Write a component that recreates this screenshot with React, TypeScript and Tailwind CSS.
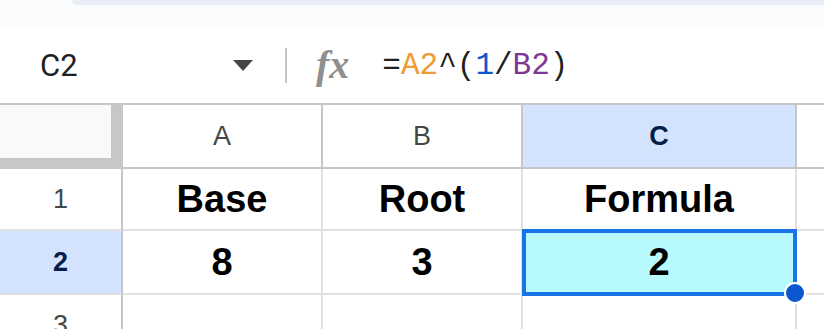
import React from "react";

const cols = [
  { key: "A", w: "w-[200px]" },
  { key: "B", w: "w-[200px]" },
  { key: "C", w: "w-[274px]" },
];

const rows = [
  { n: 1, h: "h-[62px]", cells: ["Base", "Root", "Formula"] },
  { n: 2, h: "h-[64px]", cells: ["8", "3", "2"] },
  { n: 3, h: "h-[62px]", cells: ["", "", ""] },
];

function FormulaBar() {
  return (
    <div className="flex h-[76px] items-center bg-white">
      {/* name box */}
      <div className="flex w-[285px] items-center pl-[40px] pr-[32px]">
        <span className="flex-1 font-['Roboto'] text-[31px] leading-none text-[#1f1f1f]">C2</span>
        <span className="h-0 w-0 border-x-[10px] border-t-[11px] border-x-transparent border-t-[#444746]" />
      </div>
      <div className="h-[35px] w-[2px] bg-[#c4c7c5]" />
      <span className="ml-[29px] font-['Liberation_Serif'] text-[40px] font-bold italic leading-none text-[#8f8f8f]">
        fx
      </span>
      <div className="ml-[33px] font-['Liberation_Mono'] text-[31px] leading-none text-[#1f1f1f]">
        =<span className="text-[#f09a35]">A2</span>^(<span className="text-[#1155cc]">1</span>/
        <span className="text-[#7e3794]">B2</span>)
      </div>
    </div>
  );
}

export default function App() {
  return (
    <div className="h-[329px] w-[824px] overflow-hidden bg-white font-['Liberation_Sans',Arial,sans-serif]">
      {/* top strip */}
      <div className="h-[27px] bg-[#f9fbfd]">
        <div className="ml-[72px] h-[5px] rounded-bl-[14px] bg-[#e9eef6]" />
      </div>

      <FormulaBar />
      <div className="h-[2px] bg-[#c4c7c5]" />

      {/* column headers */}
      <div className="flex h-[64px]">
        <div className="w-[123px] shrink-0 bg-[#c7c7c7]">
          <div className="h-[53px] w-[111px] bg-[#f8f9fa]" />
        </div>
        {cols.map((c) => (
          <div
            key={c.key}
            className={`${c.w} flex shrink-0 items-center justify-center border-r-2 border-b-2 border-[#c4c7c5] text-[27px] ${
              c.key === "C" ? "bg-[#d3e3fd] font-bold text-[#041e49]" : "bg-white text-[#444746]"
            }`}
          >
            {c.key}
          </div>
        ))}
        <div className="flex-1 border-b-2 border-[#c4c7c5] bg-white" />
      </div>

      {/* body */}
      {rows.map((r) => (
        <div key={r.n} className="flex">
          <div
            className={`${r.h} flex w-[123px] shrink-0 items-center justify-center border-r-2 border-b-2 border-r-[#c4c7c5] border-b-[#e1e1e1] text-[27px] ${
              r.n === 2 ? "bg-[#d3e3fd] font-bold text-[#041e49]" : "bg-white text-[#444746]"
            }`}
          >
            {r.n}
          </div>
          {r.cells.map((v, i) => {
            const selected = r.n === 2 && i === 2;
            return (
              <div
                key={i}
                className={`${cols[i].w} ${r.h} relative flex shrink-0 items-center justify-center border-r-2 border-b-2 border-[#e1e1e1] text-[38px] font-bold text-black ${
                  selected ? "z-10 bg-[#b6fafd]" : "bg-white"
                }`}
              >
                {selected && (
                  <>
                    <div className="absolute -left-[1px] -top-[2px] h-[67px] w-[275px] border-4 border-[#1a73e8]" />
                    <div className="absolute -bottom-[11px] -right-[11px] h-[22px] w-[22px] rounded-full border-2 border-white bg-[#0b57d0]" />
                  </>
                )}
                <span className="relative">{v}</span>
              </div>
            );
          })}
          <div className={`${r.h} flex-1 border-b-2 border-[#e1e1e1] bg-white`} />
        </div>
      ))}
    </div>
  );
}
